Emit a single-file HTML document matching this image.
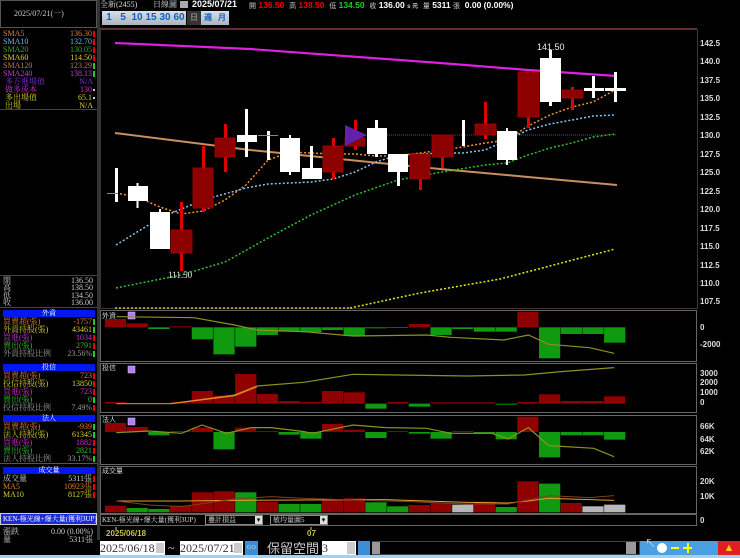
<!DOCTYPE html>
<html><head><meta charset="utf-8"><style>
*{margin:0;padding:0;box-sizing:border-box}
body{width:740px;height:558px;background:#000;overflow:hidden;position:relative;font-family:"Liberation Serif","Noto Serif CJK TC","Noto Sans CJK TC",serif;font-size:8px;line-height:8px;color:#ddd}
.a{position:absolute;white-space:nowrap}
.r{position:absolute;right:5px;text-align:right;white-space:nowrap}
.row{position:absolute;left:3px;width:92px;height:8px}
.hd{position:absolute;left:3px;width:92px;height:7px;background:#0018f0;color:#fff;text-align:center;line-height:7px;font-size:7px}
.btn{position:absolute;top:11px;height:14px;width:14px;background:linear-gradient(#d8e0e8,#a8b4c0);color:#1060c0;font-weight:bold;font-size:10px;line-height:14px;text-align:center;font-family:"Liberation Sans",sans-serif}
.ax{position:absolute;left:700px;font-family:"Liberation Sans",sans-serif;font-size:8px;color:#ddd;font-weight:bold}
.m{display:inline-block;width:2px;height:6px;margin-left:1px;vertical-align:middle}
</style></head><body>

<!-- left panel -->
<div class="a" style="left:0;top:0;width:97px;height:28px;border:1px solid #555"></div>
<div class="a" style="left:14px;top:10px;color:#ccc">2025/07/21(一)</div>
<div class="a" style="left:97px;top:0;width:3px;height:540px;background:#333"></div>
<div class="a" style="left:0;top:28px;width:97px;height:82px;border-bottom:1px solid #444"></div>
<div class="row" style="top:30px;color:#e08030">SMA5<span class="r" style="right:0">136.30<i class="m" style="background:#e00"></i></span></div>
<div class="row" style="top:38px;color:#70b8e8">SMA10<span class="r" style="right:0">132.70<i class="m" style="background:#e00"></i></span></div>
<div class="row" style="top:46px;color:#30b030">SMA20<span class="r" style="right:0">130.05<i class="m" style="background:#e00"></i></span></div>
<div class="row" style="top:54px;color:#d8d030">SMA60<span class="r" style="right:0">114.50<i class="m" style="background:#e00"></i></span></div>
<div class="row" style="top:62px;color:#b08050">SMA120<span class="r" style="right:0">123.29<i class="m" style="background:#2c2"></i></span></div>
<div class="row" style="top:70px;color:#c040d0">SMA240<span class="r" style="right:0">138.13<i class="m" style="background:#2c2"></i></span></div>
<div class="row" style="top:78px;color:#8030e0">&nbsp;多方進場值<span class="r" style="right:2px">N/A</span></div>
<div class="row" style="top:86px;color:#d030d0">&nbsp;做多成本<span class="r" style="right:0">130<i class="m" style="background:#ccc;height:2px"></i></span></div>
<div class="row" style="top:94px;color:#d8d030">&nbsp;多出場值<span class="r" style="right:0">65.1<i class="m" style="background:#ccc;height:2px"></i></span></div>
<div class="row" style="top:102px;color:#d8d030">&nbsp;出場<span class="r" style="right:2px">N/A</span></div>

<div class="a" style="left:0;top:275px;width:97px;height:33px;border-top:1px solid #444;border-bottom:1px solid #444"></div>
<div class="row" style="top:277px;color:#ccc">開<span class="r" style="right:2px">136.50</span></div>
<div class="row" style="top:284px;color:#ccc">高<span class="r" style="right:2px">138.50</span></div>
<div class="row" style="top:292px;color:#ccc">低<span class="r" style="right:2px">134.50</span></div>
<div class="row" style="top:299px;color:#ccc">收<span class="r" style="right:2px">136.00</span></div>

<div class="hd" style="top:310px">外資</div>
<div class="row" style="top:318px;color:#e08030">買賣超(張)<span class="r" style="right:0">-1757<i class="m" style="background:#2c2"></i></span></div>
<div class="row" style="top:326px;color:#d8d030">外資持股(張)<span class="r" style="right:0">43461<i class="m" style="background:#2c2"></i></span></div>
<div class="row" style="top:334px;color:#d030d0">買進(張)<span class="r" style="right:0">1034<i class="m" style="background:#e00"></i></span></div>
<div class="row" style="top:342px;color:#30c030">賣出(張)<span class="r" style="right:0">2791<i class="m" style="background:#e00"></i></span></div>
<div class="row" style="top:350px;color:#999">外資持股比例<span class="r" style="right:0">23.56%<i class="m" style="background:#2c2"></i></span></div>

<div class="hd" style="top:364px">投信</div>
<div class="row" style="top:372px;color:#e08030">買賣超(張)<span class="r" style="right:0">723<i class="m" style="background:#e00"></i></span></div>
<div class="row" style="top:380px;color:#d8d030">投信持股(張)<span class="r" style="right:0">13850<i class="m" style="background:#e00"></i></span></div>
<div class="row" style="top:388px;color:#d030d0">買進(張)<span class="r" style="right:0">723<i class="m" style="background:#e00"></i></span></div>
<div class="row" style="top:396px;color:#30c030">賣出(張)<span class="r" style="right:0">0<i class="m" style="background:#2c2"></i></span></div>
<div class="row" style="top:404px;color:#999">投信持股比例<span class="r" style="right:0">7.49%<i class="m" style="background:#e00"></i></span></div>

<div class="hd" style="top:415px">法人</div>
<div class="row" style="top:423px;color:#e08030">買賣超(張)<span class="r" style="right:0">-939<i class="m" style="background:#2c2"></i></span></div>
<div class="row" style="top:431px;color:#d8d030">法人持股(張)<span class="r" style="right:0">61345<i class="m" style="background:#2c2"></i></span></div>
<div class="row" style="top:439px;color:#d030d0">買進(張)<span class="r" style="right:0">1882<i class="m" style="background:#e00"></i></span></div>
<div class="row" style="top:447px;color:#30c030">賣出(張)<span class="r" style="right:0">2821<i class="m" style="background:#e00"></i></span></div>
<div class="row" style="top:455px;color:#999">法人持股比例<span class="r" style="right:0">33.17%<i class="m" style="background:#2c2"></i></span></div>

<div class="a" style="left:0;top:463px;width:97px;height:1px;background:#555"></div>
<div class="hd" style="top:467px">成交量</div>
<div class="row" style="top:475px;color:#ccc">成交量<span class="r" style="right:0">5311張<i class="m" style="background:#e00"></i></span></div>
<div class="row" style="top:483px;color:#e08030">MA5<span class="r" style="right:0">10923張<i class="m" style="background:#e00"></i></span></div>
<div class="row" style="top:491px;color:#d8d030">MA10<span class="r" style="right:0">8127張<i class="m" style="background:#e00"></i></span></div>
<div class="a" style="left:0;top:513px;width:97px;height:12px;background:#1a2ad8;border:1px solid #ccc;color:#fff;font-size:7px;line-height:10px;padding-left:2px">KEN-極光線+爆大量(獲利3UP)</div>
<div class="row" style="top:528px;color:#ccc">漲跌<span class="r" style="right:2px">0.00 (0.00%)</span></div>
<div class="row" style="top:536px;color:#ccc">量<span class="r" style="right:2px">5311張</span></div>

<!-- top toolbar -->
<div class="a" style="left:100px;top:1px;color:#ddd">全新(2455)</div>
<div class="a" style="left:153px;top:1px;color:#ddd">日線圖</div>
<div class="a" style="left:180px;top:1px;width:8px;height:7px;background:#aaa"></div>
<div class="a" style="left:192px;top:0px;font-family:'Liberation Sans',sans-serif;font-weight:bold;font-size:9px;color:#fff">2025/07/21</div>
<div class="a" style="left:249px;top:1px;font-family:'Liberation Sans','Noto Sans CJK TC',sans-serif;font-weight:bold;font-size:8.5px;color:#ccc">
<span style="font-weight:normal;font-size:7px">開</span> <span style="color:#e00">136.50</span>&nbsp; <span style="font-weight:normal;font-size:7px">高</span> <span style="color:#e00">138.50</span>&nbsp; <span style="font-weight:normal;font-size:7px">低</span> <span style="color:#2c2">134.50</span>&nbsp; <span style="font-weight:normal;font-size:7px">收</span> <span style="color:#fff">136.00</span> <span style="font-size:6px">s 元</span>&nbsp; <span style="font-weight:normal;font-size:7px">量</span> <span style="color:#fff">5311</span> <span style="font-weight:normal;font-size:7px">張</span>&nbsp; <span style="color:#fff">0.00 (0.00%)</span></div>
<div class="btn" style="left:102px">1</div>
<div class="btn" style="left:116px">5</div>
<div class="btn" style="left:130px">10</div>
<div class="btn" style="left:144px">15</div>
<div class="btn" style="left:158px">30</div>
<div class="btn" style="left:172px">60</div>
<div class="btn" style="left:187px;background:#333;color:#888;font-size:8px">日</div>
<div class="btn" style="left:201px;font-size:8px">週</div>
<div class="btn" style="left:215px;font-size:8px">月</div>
<div class="a" style="left:100px;top:28px;width:597px;height:1px;background:#633"></div>

<!-- axis labels -->
<div class="ax" style="top:40px">142.5</div><div class="ax" style="top:58px">140.0</div><div class="ax" style="top:77px">137.5</div><div class="ax" style="top:95px">135.0</div><div class="ax" style="top:114px">132.5</div><div class="ax" style="top:132px">130.0</div><div class="ax" style="top:151px">127.5</div><div class="ax" style="top:169px">125.0</div><div class="ax" style="top:188px">122.5</div><div class="ax" style="top:206px">120.0</div><div class="ax" style="top:225px">117.5</div><div class="ax" style="top:243px">115.0</div><div class="ax" style="top:262px">112.5</div><div class="ax" style="top:280px">110.0</div><div class="ax" style="top:298px">107.5</div>
<div class="ax" style="top:324px">0</div><div class="ax" style="top:341px">-2000</div>
<div class="ax" style="top:370px">3000</div><div class="ax" style="top:379px">2000</div><div class="ax" style="top:389px">1000</div><div class="ax" style="top:399px">0</div>
<div class="ax" style="top:423px">66K</div><div class="ax" style="top:436px">64K</div><div class="ax" style="top:448px">62K</div>
<div class="ax" style="top:478px">20K</div><div class="ax" style="top:493px">10K</div>
<div class="ax" style="top:517px">0</div>

<svg class="a" style="left:0;top:0" width="740" height="558">
<!-- main chart frame -->
<rect x="100.5" y="29.5" width="597" height="279" fill="none" stroke="#433"/>
<polyline points="115,43 250,49 440,63 528,70 617,76" fill="none" stroke="#e020e0" stroke-width="2.2"/>
<polyline points="115,133 250,150 440,169 528,177 617,185" fill="none" stroke="#c89060" stroke-width="2"/>
<line x1="367" y1="135" x2="617" y2="135" stroke="#803080" stroke-dasharray="1,1"/>
<polyline points="350,308 420,293 500,279 615,249" fill="none" stroke="#e8e820" stroke-width="1.5" stroke-dasharray="2,2"/>
<line x1="115" y1="308" x2="350" y2="308" stroke="#c8c040" stroke-width="1.5" stroke-dasharray="2,2"/>
<polyline points="116,288 181,275 225,262 268,238 311,215 355,195 398,180 442,172 485,165 507,163 528,155 550,148 572,143 593,137 615,134" fill="none" stroke="#30c030" stroke-width="1.5" stroke-dasharray="2,2"/>
<polyline points="116,245 160,218 203,200 246,188 268,184 311,182 333,179 355,172 376,162 398,155 420,154 442,153 463,153 485,150 507,140 528,130 550,124 572,120 593,116 615,115" fill="none" stroke="#80c8f0" stroke-width="1.5" stroke-dasharray="2,2"/>
<polyline points="116,193 137,197 160,207 181,214 203,211 225,200 246,185 268,160 290,152 311,153 333,154 355,154 376,156 398,156 420,153 442,150 463,147 485,143 507,140 528,126 550,115 572,107 593,102 615,90" fill="none" stroke="#f09030" stroke-width="1.5" stroke-dasharray="2,2"/>
<!-- candles -->
<g fill="#fff" stroke="none">
<rect x="115" y="168" width="3" height="34"/><rect x="107" y="193" width="11" height="1" fill="#888"/>
<rect x="136.5" y="183" width="2" height="25"/><rect x="128" y="186" width="20" height="15"/>
<rect x="159" y="209" width="2" height="5"/><rect x="150" y="212" width="20" height="37"/>
<rect x="245" y="109" width="3" height="48"/><rect x="237" y="135" width="20" height="7"/>
<rect x="267" y="131" width="3" height="29"/><rect x="258" y="135" width="20" height="1" fill="#888"/>
<rect x="289" y="135" width="2" height="40"/><rect x="280" y="138" width="20" height="34"/>
<rect x="310" y="146" width="3" height="33"/><rect x="302" y="168" width="20" height="11"/>
<rect x="375" y="120" width="3" height="37"/><rect x="367" y="128" width="20" height="26"/>
<rect x="397" y="154" width="3" height="32"/><rect x="388" y="154" width="20" height="18"/>
<rect x="462" y="120" width="3" height="26"/>
<rect x="506" y="128" width="2" height="37"/><rect x="497" y="131" width="20" height="29"/>
<rect x="549" y="50" width="3" height="56"/><rect x="540" y="58" width="21" height="44"/>
<rect x="592" y="76" width="3" height="22"/><rect x="584" y="88" width="20" height="3"/>
<rect x="614" y="72" width="3" height="30"/><rect x="605" y="88" width="21" height="3"/>
</g>
<g fill="#e00000">
<rect x="180" y="202" width="3" height="69"/>
<rect x="202" y="146" width="3" height="66"/>
<rect x="224" y="124" width="3" height="48"/>
<rect x="332" y="138" width="3" height="41"/>
<rect x="354" y="120" width="3" height="30"/>
<rect x="419" y="154" width="3" height="36"/>
<rect x="441" y="135" width="3" height="33"/>
<rect x="484" y="102" width="3" height="37"/>
<rect x="527" y="72" width="3" height="56"/>
<rect x="571" y="87" width="3" height="23"/>
</g>
<g fill="#8c0000" stroke="#b00000" stroke-width="0.8">
<rect x="171" y="230" width="21" height="23"/>
<rect x="193" y="168" width="20" height="40"/>
<rect x="215" y="138" width="20" height="19"/>
<rect x="323" y="146" width="20" height="26"/>
<rect x="345" y="138" width="20" height="8"/>
<rect x="410" y="154" width="20" height="25"/>
<rect x="432" y="135" width="21" height="22"/>
<rect x="475" y="124" width="21" height="11"/>
<rect x="518" y="72" width="21" height="45"/>
<rect x="562" y="90" width="21" height="8"/>
</g>
<polygon points="345,125 367,135 345,146" fill="#6020b0"/>
<text x="537" y="50" fill="#eee" font-size="9" font-family="Liberation Sans,sans-serif">141.50</text>
<text x="168" y="278" fill="#eee" font-size="9" font-family="Liberation Serif,serif">111.50</text>

<!-- sub panels frames -->
<g fill="none" stroke="#666">
<rect x="100.5" y="310.5" width="596" height="51"/>
<rect x="100.5" y="363.5" width="596" height="49"/>
<rect x="100.5" y="415.5" width="596" height="49"/>
<rect x="100.5" y="466.5" width="596" height="47"/>
<rect x="100.5" y="514.5" width="596" height="11"/>
</g>
<g font-size="7" fill="#ccc" font-family="Noto Sans CJK TC,sans-serif">
<text x="102" y="318">外資</text><text x="102" y="370">投信</text><text x="102" y="422">法人</text><text x="102" y="473">成交量</text>
</g>
<g fill="#b080f0" stroke="#e0c0ff" stroke-width="0.5">
<rect x="128" y="312" width="7" height="7"/><rect x="128" y="366" width="7" height="7"/><rect x="128" y="418" width="7" height="7"/>
</g>

<g transform="translate(100,305) scale(0.408,0.3333)">
<g stroke-width="1" vector-effect="non-scaling-stroke">
<!-- 外資 -->
<g fill="#900000"><rect x="12" y="42" width="52" height="25"/><rect x="65.2" y="55" width="52" height="12"/><rect x="171.6" y="64" width="52" height="3"/><rect x="756.8" y="57" width="52" height="10"/><rect x="1022.8" y="20" width="52" height="47"/></g>
<g fill="#109a10"><rect x="118.4" y="67" width="52" height="5"/><rect x="224.8" y="67" width="52" height="36"/><rect x="278" y="67" width="52" height="81"/><rect x="331.2" y="67" width="52" height="58"/><rect x="384.4" y="67" width="52" height="23"/><rect x="437.6" y="67" width="52" height="13"/><rect x="490.8" y="67" width="52" height="15"/><rect x="544" y="67" width="52" height="8"/><rect x="597.2" y="67" width="52" height="26"/><rect x="650.4" y="67" width="52" height="3"/><rect x="703.6" y="67" width="52" height="2"/><rect x="810" y="67" width="52" height="23"/><rect x="863.2" y="67" width="52" height="5"/><rect x="916.4" y="67" width="52" height="13"/><rect x="969.6" y="67" width="52" height="13"/><rect x="1076" y="67" width="52" height="93"/><rect x="1129.2" y="67" width="52" height="20"/><rect x="1182.4" y="67" width="52" height="20"/><rect x="1235.6" y="67" width="52" height="46"/></g>
<polyline points="40,35 230,38 330,60 385,75 500,80 620,93 800,90 860,97 990,105 1050,90 1100,118 1200,128 1260,145" fill="none" stroke="#909020" stroke-width="1.2" vector-effect="non-scaling-stroke"/>
<!-- 投信 -->
<g fill="#900000"><rect x="12" y="291" width="52" height="5"/><rect x="65.2" y="294" width="52" height="2"/><rect x="118.4" y="294" width="52" height="2"/><rect x="171.6" y="292" width="52" height="4"/><rect x="224.8" y="258" width="52" height="38"/><rect x="278" y="272" width="52" height="24"/><rect x="331.2" y="207" width="52" height="89"/><rect x="384.4" y="267" width="52" height="29"/><rect x="437.6" y="288" width="52" height="8"/><rect x="490.8" y="291" width="52" height="5"/><rect x="544" y="258" width="52" height="38"/><rect x="597.2" y="262" width="52" height="34"/><rect x="703.6" y="291" width="52" height="5"/><rect x="810" y="292" width="52" height="4"/><rect x="863.2" y="292" width="52" height="4"/><rect x="916.4" y="292" width="52" height="4"/><rect x="1022.8" y="291" width="52" height="5"/><rect x="1076" y="268" width="52" height="28"/><rect x="1129.2" y="288" width="52" height="8"/><rect x="1182.4" y="288" width="52" height="8"/><rect x="1235.6" y="274" width="52" height="22"/></g>
<g fill="#109a10"><rect x="650.4" y="296" width="52" height="15"/><rect x="756.8" y="296" width="52" height="9"/><rect x="969.6" y="296" width="52" height="3"/></g>
<polyline points="40,296 175,296 330,270 385,243 500,232 620,208 900,213 1040,210 1130,200 1260,188" fill="none" stroke="#909020" stroke-width="1.2" vector-effect="non-scaling-stroke"/>
<polyline points="175,296 330,272 385,245" fill="none" stroke="#f08020" stroke-width="1.2" vector-effect="non-scaling-stroke"/>
<!-- 法人 -->
<g fill="#900000"><rect x="12" y="354" width="52" height="27"/><rect x="65.2" y="366" width="52" height="15"/><rect x="171.6" y="378" width="52" height="3"/><rect x="224.8" y="368" width="52" height="13"/><rect x="331.2" y="368" width="52" height="13"/><rect x="384.4" y="378" width="52" height="3"/><rect x="544" y="357" width="52" height="24"/><rect x="597.2" y="374" width="52" height="7"/><rect x="703.6" y="378" width="52" height="3"/><rect x="863.2" y="378" width="52" height="3"/><rect x="1022.8" y="335" width="52" height="46"/></g>
<g fill="#109a10"><rect x="118.4" y="381" width="52" height="10"/><rect x="278" y="381" width="52" height="52"/><rect x="437.6" y="381" width="52" height="8"/><rect x="490.8" y="381" width="52" height="20"/><rect x="650.4" y="381" width="52" height="18"/><rect x="756.8" y="381" width="52" height="5"/><rect x="810" y="381" width="52" height="20"/><rect x="916.4" y="381" width="52" height="5"/><rect x="969.6" y="381" width="52" height="22"/><rect x="1076" y="381" width="52" height="76"/><rect x="1129.2" y="381" width="52" height="10"/><rect x="1182.4" y="381" width="52" height="10"/><rect x="1235.6" y="381" width="52" height="23"/></g>
<polyline points="40,383 120,378 200,385 250,360 310,385 370,368 420,368 500,380 520,385 620,360 700,368 800,370 860,385 960,385 1000,402 1050,368 1100,422 1210,430 1260,455" fill="none" stroke="#909020" stroke-width="1.2" vector-effect="non-scaling-stroke"/>
<!-- 成交量 -->
<g fill="#900000"><rect x="12" y="602" width="52" height="20"/><rect x="171.6" y="602" width="52" height="20"/><rect x="224.8" y="562" width="52" height="60"/><rect x="278" y="559" width="52" height="63"/><rect x="384.4" y="590" width="52" height="32"/><rect x="544" y="585" width="52" height="37"/><rect x="597.2" y="580" width="52" height="42"/><rect x="756.8" y="600" width="52" height="22"/><rect x="810" y="594" width="52" height="28"/><rect x="916.4" y="590" width="52" height="32"/><rect x="1022.8" y="529" width="52" height="93"/><rect x="1129.2" y="594" width="52" height="28"/></g>
<g fill="#109a10"><rect x="65.2" y="609" width="52" height="13"/><rect x="118.4" y="612" width="52" height="10"/><rect x="331.2" y="562" width="52" height="60"/><rect x="437.6" y="597" width="52" height="25"/><rect x="490.8" y="597" width="52" height="25"/><rect x="650.4" y="592" width="52" height="30"/><rect x="703.6" y="604" width="52" height="18"/><rect x="969.6" y="606" width="52" height="16"/><rect x="1076" y="536" width="52" height="86"/></g>
<g fill="#b8b8b8"><rect x="863.2" y="599" width="52" height="23"/><rect x="1182.4" y="604" width="52" height="18"/><rect x="1235.6" y="599" width="52" height="23"/></g>
<polyline points="40,588 200,588 330,586 500,585 700,584 900,592 1000,594 1050,588 1100,580 1260,586" fill="none" stroke="#e0a030" stroke-width="1" vector-effect="non-scaling-stroke"/>
<polyline points="40,588 120,600 200,605 330,582 420,575 500,580 620,585 760,590 900,597 1000,597 1050,585 1100,572 1200,578 1260,572" fill="none" stroke="#804020" stroke-width="1" vector-effect="non-scaling-stroke"/>
</g></g>

<!-- date ticks -->
<line x1="116" y1="527" x2="116" y2="530" stroke="#ccc"/><line x1="311" y1="527" x2="311" y2="530" stroke="#ccc"/>
</svg>

<!-- lower controls -->
<div class="a" style="left:102px;top:516px;color:#ddd;font-size:7px">KEN-極光線+爆大量(獲利3UP)</div>
<div class="a" style="left:205px;top:515px;width:58px;height:10px;border:1px solid #888;color:#ddd;font-size:7px;line-height:8px;padding-left:2px">疊計損益<span style="position:absolute;right:0;top:0;width:7px;height:8px;background:#ddd;color:#000;text-align:center">▾</span></div>
<div class="a" style="left:270px;top:515px;width:58px;height:10px;border:1px solid #888;color:#ddd;font-size:7px;line-height:8px;padding-left:2px">敏均量圖5<span style="position:absolute;right:0;top:0;width:7px;height:8px;background:#ddd;color:#000;text-align:center">▾</span></div>
<div class="a" style="left:106px;top:530px;color:#c8c040;font-family:'Liberation Sans',sans-serif;font-weight:bold;font-size:8px">2025/06/18</div>
<div class="a" style="left:307px;top:530px;color:#c8c040;font-family:'Liberation Sans',sans-serif;font-weight:bold;font-size:8px">07</div>

<div class="a" style="left:100px;top:541px;width:65px;height:14px;background:#fff;color:#333;font-size:12px;line-height:14px;font-family:'Liberation Serif',serif">2025/06/18<span style="position:absolute;right:1px;top:2px;width:8px;height:10px;background:#ccc"></span></div>
<div class="a" style="left:168px;top:541px;color:#ccc;font-size:12px;line-height:14px">~</div>
<div class="a" style="left:180px;top:541px;width:63px;height:14px;background:#fff;color:#333;font-size:12px;line-height:14px;font-family:'Liberation Serif',serif">2025/07/21<span style="position:absolute;right:1px;top:2px;width:8px;height:10px;background:#ccc"></span></div>
<div class="a" style="left:245px;top:541px;width:13px;height:14px;background:#3a8ed8;color:#cde;font-size:6px;line-height:14px;text-align:center">GO</div>
<div class="a" style="left:267px;top:540px;color:#ccc;font-size:13px;line-height:16px;font-family:'Noto Sans CJK TC',sans-serif">保留空間</div>
<div class="a" style="left:322px;top:541px;width:34px;height:14px;background:#fff;color:#333;font-size:12px;line-height:14px">3<span style="position:absolute;right:1px;top:1px;width:8px;height:12px;background:#ccc"></span></div>
<div class="a" style="left:358px;top:541px;width:12px;height:14px;background:#3a8ed8"></div>
<div class="a" style="left:372px;top:541px;width:268px;height:14px;background:#000;border:1px solid #444"></div>
<div class="a" style="left:372px;top:542px;width:8px;height:12px;background:#999"></div>
<div class="a" style="left:626px;top:542px;width:10px;height:12px;background:#999"></div>
<div class="a" style="left:640px;top:541px;width:100px;height:14px;background:#4aa0e0"></div>
<div class="a" style="left:645px;top:540px;color:#fff;font-size:11px">↖</div>
<div class="a" style="left:657px;top:543px;width:10px;height:10px;border-radius:50%;background:#fff"></div>
<div class="a" style="left:671px;top:547px;width:8px;height:2px;background:#ff0"></div>
<div class="a" style="left:683px;top:547px;width:9px;height:2px;background:#ff0"></div><div class="a" style="left:687px;top:543px;width:2px;height:10px;background:#ff0"></div>
<div class="a" style="left:718px;top:541px;width:22px;height:14px;background:#e02020;color:#fc0;font-size:11px;text-align:center;line-height:14px">▲</div>
<div class="a" style="left:0;top:555px;width:740px;height:3px;background:#a8d0e8"></div>
</body></html>
